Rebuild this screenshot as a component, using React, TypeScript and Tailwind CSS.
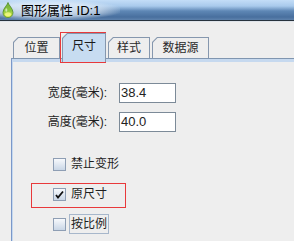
import React from 'react';

const cjk = { fontFamily: '"Liberation Sans", "Noto Sans CJK SC", sans-serif' };

const tabs = [
  { id: 'pos', label: '位置', w: 'w-[47px]', selected: false },
  { id: 'size', label: '尺寸', w: 'w-[44px]', selected: true },
  { id: 'style', label: '样式', w: 'w-[42px]', selected: false },
  { id: 'data', label: '数据源', w: 'w-[57px]', selected: false },
];

const Droplet = () => (
  <svg width="12" height="16" viewBox="0 0 12 16">
    <defs>
      <linearGradient id="drop" x1="0" y1="0" x2="0" y2="1">
        <stop offset="0" stopColor="#6fae3a" />
        <stop offset="0.55" stopColor="#8cc63f" />
        <stop offset="1" stopColor="#e4f04a" />
      </linearGradient>
    </defs>
    <path d="M6 0.5 C6.5 3 11 6.5 11 10.5 C11 13.5 8.8 15.5 6 15.5 C3.2 15.5 1 13.5 1 10.5 C1 6.5 5.5 3 6 0.5 Z" fill="url(#drop)" stroke="#4f8a2a" strokeWidth="0.8" />
    <ellipse cx="6" cy="12.2" rx="3" ry="2" fill="#f6fb8a" opacity="0.8" />
    <ellipse cx="4.3" cy="8" rx="1" ry="1.8" fill="#ffffff" opacity="0.6" />
  </svg>
);

const Tab: React.FC<{ label: string; w: string; selected: boolean }> = ({ label, w, selected }) => (
  <div
    className={`${w} ${selected ? 'h-[29px] -mb-[4px] z-10' : 'h-[21px]'} relative bg-[#8597ae] pt-px px-px`}
    style={{ clipPath: 'polygon(5px 0, 100% 0, 100% 100%, 0 100%, 0 5px)' }}
  >
    <div
      className={`h-full flex items-center justify-center text-[12px] ${selected ? 'bg-[#c7dcf1] text-[#1a1a1a]' : 'bg-[#eeeeee] text-[#2a2a2a]'}`}
      style={{ clipPath: 'polygon(4.5px 0, 100% 0, 100% 100%, 0 100%, 0 4.5px)' }}
    >
      <span className={selected ? '-mt-[5px]' : ''}>{label}</span>
    </div>
  </div>
);

const Checkbox: React.FC<{ checked?: boolean }> = ({ checked }) => (
  <div className="w-[13px] h-[13px] border border-[#8e9eb4] bg-gradient-to-b from-[#f7f9fc] to-[#c9d6e6] flex items-center justify-center">
    {checked && (
      <svg width="9" height="9" viewBox="0 0 9 9">
        <path d="M1 5 L3 7.5 L8 1.5" fill="none" stroke="#111" strokeWidth="1.8" />
      </svg>
    )}
  </div>
);

export default function App() {
  return (
    <div className="w-[294px] h-[241px] bg-[#eeeeee] overflow-hidden relative" style={cjk}>
      {/* title bar */}
      <div className="h-[22px] flex flex-col">
        <div className="h-[20px] flex items-center gap-[7px] pl-[2px] bg-[linear-gradient(to_bottom,#c3ddf7_0%,#a9caec_30%,#5e87b5_55%,#486f9e_85%,#5e82ad_100%)] relative">
          <div className="absolute inset-y-0 left-0 w-[120px] bg-[radial-gradient(ellipse_at_40%_50%,rgba(235,243,251,0.95)_0%,rgba(235,243,251,0.6)_50%,rgba(235,243,251,0)_75%)]" />
          <div className="relative"><Droplet /></div>
          <span className="relative text-[13px] text-black leading-none">图形属性 ID:1</span>
        </div>
        <div className="h-px bg-[#27323d]" />
        <div className="h-px bg-[#dfe4ea]" />
      </div>

      {/* tabs */}
      <div className="pt-[11px]">
        <div className="ml-[13px] flex items-end gap-[2px]">
          {tabs.map((t) => (
            <Tab key={t.id} label={t.label} w={t.w} selected={t.selected} />
          ))}
        </div>

        {/* panel */}
        <div className="ml-[11px] border-l border-t border-l-[#7b98c9] border-t-[#8096b0]">
          <div className="border-t-[3px] border-l border-[#c6d9ef] h-[200px]">
            <div className="pt-[21px] flex flex-col gap-[9px] text-[12px] text-[#1e1e1e]">
              <div className="flex items-center gap-[12px]">
                <span className="w-[94px] text-right">宽度(毫米):</span>
                <div className="w-[57px] h-[20px] border border-[#7c8a98] bg-white flex items-center pl-[1px] text-[13px] text-[#222]">38.4</div>
              </div>
              <div className="flex items-center gap-[12px]">
                <span className="w-[94px] text-right">高度(毫米):</span>
                <div className="w-[57px] h-[20px] border border-[#7c8a98] bg-white flex items-center pl-[1px] text-[13px] text-[#222]">40.0</div>
              </div>
            </div>

            <div className="mt-[22px] pl-[40px] flex flex-col gap-[10px] text-[12px] text-[#1e1e1e]">
              <div className="h-[20px] flex items-center gap-[3px]">
                <Checkbox />
                <span className="h-[20px] px-px border border-transparent flex items-center">禁止变形</span>
              </div>
              <div className="h-[20px] flex items-center gap-[3px]">
                <Checkbox checked />
                <span className="h-[20px] px-px border border-transparent flex items-center">原尺寸</span>
              </div>
              <div className="h-[20px] flex items-center gap-[3px]">
                <Checkbox />
                <span className="h-[20px] px-px border border-[#a7b7cb] flex items-center">按比例</span>
              </div>
            </div>
          </div>
        </div>
      </div>

      {/* annotation boxes */}
      <div className="absolute left-[60px] top-[32px] w-[46px] h-[31px] border border-[#e8393b]" />
      <div className="absolute left-[31px] top-[183px] w-[95px] h-[25px] border border-[#e8393b]" />
    </div>
  );
}
